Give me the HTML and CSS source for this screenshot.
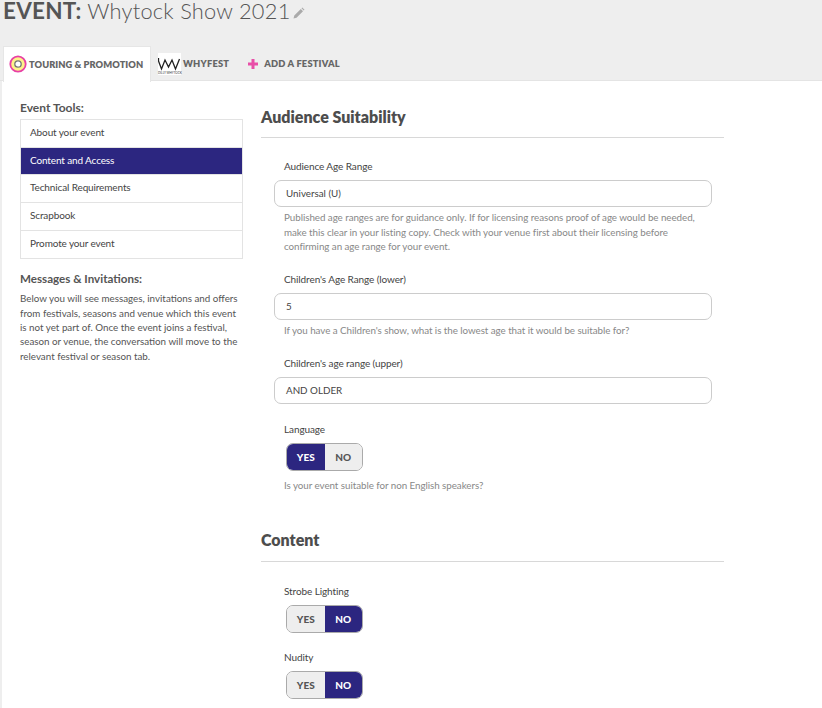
FILE: index.html
```html
<!DOCTYPE html>
<html lang="en">
<head>
<meta charset="utf-8">
<title>Whytock Show 2021</title>
<link rel="stylesheet" href="styles.css">
</head>
<body>
<header class="page-head">
  <h1 class="title"><b>EVENT:</b> Whytock Show 2021<svg class="pencil" width="12" height="12" viewBox="0 0 12 12"><path d="M0.500 11.500l0.800-3 6.500-6.500 2.200 2.200-6.500 6.500zM8.500 1.300l0.800-0.800 2.200 2.200-0.800 0.800z" fill="#aaa"/></svg></h1>
  <nav class="tabs">
    <a class="tab tab-active"><svg class="tab-icon" width="18" height="18" viewBox="0 0 18 18"><circle cx="9" cy="9" r="7.700" fill="#fdf28a" stroke="#e83fa5" stroke-width="1.800"/><circle cx="9" cy="9" r="3.200" fill="#fff" stroke="#777" stroke-width="1.300"/></svg>TOURING &amp; PROMOTION</a>
    <a class="tab tab-whyfest"><span class="logo"><svg width="23" height="14" viewBox="0 0 23 14"><path d="M0.500 1v3l3 8 3.500-9 3.500 7 3.500-7 3.500 9 4-10" fill="none" stroke="#222" stroke-width="1.300"/></svg><span class="logo-text">DILLY WHYTOCK</span></span>WHYFEST</a>
    <a class="tab tab-add"><svg class="plus" width="10" height="10" viewBox="0 0 10 10"><path d="M3.500 0h3v3.500h3.500v3h-3.500v3.500h-3v-3.500h-3.500v-3h3.500z" fill="#e84fa8"/></svg>ADD A FESTIVAL</a>
  </nav>
</header>
<main class="layout">
  <aside class="side">
    <h3 class="side-title">Event Tools:</h3>
    <ul class="menu">
      <li class="menu-item">About your event</li>
      <li class="menu-item menu-active">Content and Access</li>
      <li class="menu-item">Technical Requirements</li>
      <li class="menu-item">Scrapbook</li>
      <li class="menu-item">Promote your event</li>
    </ul>
    <h3 class="side-title side-msg">Messages &amp; Invitations:</h3>
    <p class="side-text">Below you will see messages, invitations and offers from festivals, seasons and venue which this event is not yet part of. Once the event joins a festival, season or venue, the conversation will move to the relevant festival or season tab.</p>
  </aside>
  <section class="content">
    <h2 class="section-title">Audience Suitability</h2>
    <div class="field field-first">
      <label class="label">Audience Age Range</label>
      <div class="input">Universal (U)</div>
      <p class="help">Published age ranges are for guidance only. If for licensing reasons proof of age would be needed, make this clear in your listing copy. Check with your venue first about their licensing before confirming an age range for your event.</p>
    </div>
    <div class="field field-tight">
      <label class="label">Children's Age Range (lower)</label>
      <div class="input">5</div>
      <p class="help">If you have a Children's show, what is the lowest age that it would be suitable for?</p>
    </div>
    <div class="field field-after-help">
      <label class="label">Children's age range (upper)</label>
      <div class="input">AND OLDER</div>
    </div>
    <div class="field field-tight">
      <label class="label">Language</label>
      <div class="toggle"><span class="opt opt-on">YES</span><span class="opt">NO</span></div>
      <p class="help help-toggle">Is your event suitable for non English speakers?</p>
    </div>
    <h2 class="section-title section-second">Content</h2>
    <div class="field field-first-b">
      <label class="label">Strobe Lighting</label>
      <div class="toggle"><span class="opt">YES</span><span class="opt opt-on">NO</span></div>
    </div>
    <div class="field field-nudity">
      <label class="label">Nudity</label>
      <div class="toggle"><span class="opt">YES</span><span class="opt opt-on">NO</span></div>
    </div>
  </section>
</main>
</body>
</html>
```

FILE: styles.css
```css
* { box-sizing: border-box; }
html, body { margin: 0; padding: 0; }
body {
  background: #fff;
  color: #555;
  font-family: "Lato", "Open Sans", sans-serif;
  font-size: 10px;
  height: 708px;
  overflow: hidden;
}
.page-head { background: #eee; height: 81px; border-bottom: 1px solid #e4e4e4; }
.title {
  margin: 0;
  padding: 0 0 0 3px;
  height: 46px;
  font-size: 21.800px;
  line-height: 22px;
  font-weight: 300;
  color: #555;
  letter-spacing: 0.250px;
  white-space: nowrap;
}
.title b { font-weight: 700; font-size: 22.500px; }
.pencil { margin-left: 2px; }
.tabs { display: flex; align-items: stretch; padding-left: 3px; height: 35px; }
.tab {
  display: flex;
  align-items: center;
  font-size: 9.300px;
  font-weight: 800;
  color: #666;
  letter-spacing: 0.200px;
  white-space: nowrap;
}
.tab-active {
  background: #fff;
  width: 148px;
  padding: 0 0 1px 5px;
  border: 1px solid #e6e6e6;
  border-bottom: 0;
  height: 36px;
  letter-spacing: 0.050px;
}
.tab-icon { margin-right: 2px; flex: none; }
.tab-whyfest { margin-left: 7px; }
.logo {
  width: 23px;
  height: 22px;
  background: #fff;
  display: flex;
  flex: none;
  flex-direction: column;
  justify-content: flex-end;
  margin-right: 2px;
}
.logo svg { display: block; }
.logo-text { font-size: 3px; line-height: 4px; color: #333; font-weight: 400; white-space: nowrap; letter-spacing: 0; }
.tab-add { margin-left: 19px; }
.plus { margin-right: 6px; flex: none; }
.layout { display: flex; border-left: 2px solid #eee; height: 627px; }
.side { width: 223px; margin-left: 18px; flex: none; }
.side-title { margin: 20px 0 4px; font-size: 12px; line-height: 14px; font-weight: 700; color: #555; }
.menu { list-style: none; margin: 0; padding: 0; border: 1px solid #e3e3e3; }
.menu-item {
  height: 27.700px;
  line-height: 25px;
  padding-left: 9px;
  font-size: 10px;
  letter-spacing: -0.130px;
  color: #444;
  border-bottom: 1px solid #e3e3e3;
}
.menu-item:last-child { border-bottom: 0; }
.menu-active { background: #2c2680; color: #fff; }
.side-msg { margin: 13px 0 5px; font-size: 11.600px; }
.side-text { margin: 0; font-size: 9.800px; line-height: 14.300px; color: #555; }
.content { width: 463px; margin-left: 18px; }
.section-title {
  margin: 0;
  padding: 25px 0 9px;
  font-size: 16px;
  line-height: 22px;
  font-weight: 800;
  color: #4d4d4d;
  border-bottom: 1px solid #d8d8d8;
}
.section-second { padding-top: 36px; padding-bottom: 10px; }
.field { padding-left: 23px; }
.field-first { margin-top: 21px; }
.field-first-b { margin-top: 22px; }
.field-tight { margin-top: 18px; }
.field-after-help { margin-top: 19px; }
.field-nudity { margin-top: 17px; }
.label { display: block; font-size: 10px; line-height: 14px; color: #444; letter-spacing: -0.100px; }
.input {
  margin: 7px 12px 0 -10px;
  height: 27px;
  border: 1px solid #ccc;
  border-radius: 7px;
  padding-left: 11px;
  line-height: 25px;
  font-size: 9.800px;
  color: #444;
}
.help { margin: 3px 25px 0 0; font-size: 9.800px; line-height: 14.500px; color: #888; letter-spacing: -0.050px; }
.toggle {
  display: inline-flex;
  margin: 7px 0 0 2px;
  width: 77px;
  height: 28px;
  border: 1px solid #aaa;
  border-radius: 7px;
  overflow: hidden;
  vertical-align: top;
}
.opt {
  flex: 1;
  background: #eee;
  text-align: center;
  line-height: 26px;
  font-size: 10px;
  font-weight: 900;
  color: #555;
}
.opt-on { background: #2c2680; color: #fff; }
.help-toggle { margin-top: 7px; }
```
